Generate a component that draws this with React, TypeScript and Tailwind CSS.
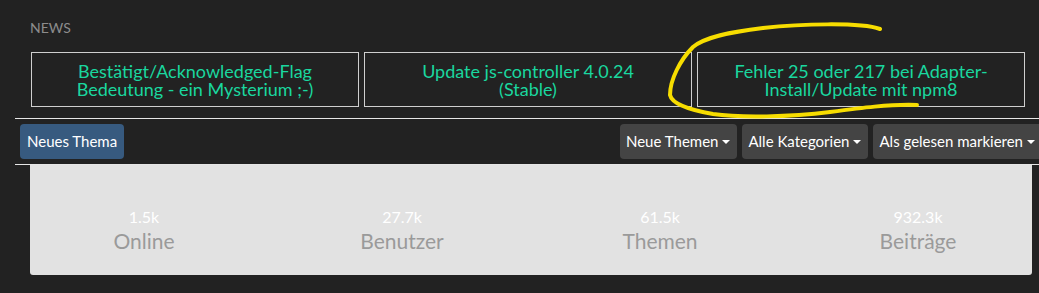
import { ReactNode } from "react";

const news = [
  ["Bestätigt/Acknowledged-Flag", "Bedeutung - ein Mysterium ;-)"],
  ["Update js-controller 4.0.24", "(Stable)"],
  ["Fehler 25 oder 217 bei Adapter-", "Install/Update mit npm8"],
];

const stats = [
  { value: "1.5k", label: "Online" },
  { value: "27.7k", label: "Benutzer" },
  { value: "61.5k", label: "Themen" },
  { value: "932.3k", label: "Beiträge" },
];

function DropButton({ children }: { children: ReactNode }) {
  return (
    <button className="flex h-[35px] items-center rounded-[4px] bg-[#444444] pl-[6px] pr-[7px] text-[15px] text-white">
      {children}
      <span className="ml-[4px] mt-[1px] h-0 w-0 border-x-[4px] border-t-[4px] border-x-transparent border-t-white"></span>
    </button>
  );
}

export default function App() {
  return (
    <div
      className="relative h-[293px] w-[1039px] overflow-hidden bg-[#222222]"
      style={{ fontFamily: "Lato, 'Open Sans', sans-serif" }}
    >
      <div className="pl-[30px] pt-[21px] text-[14px] leading-[14px] text-[#8c8c8c]">
        NEWS
      </div>

      {/* news cards */}
      <div className="ml-[31px] mt-[17px] flex gap-[5px]">
        {news.map((n, i) => (
          <div
            key={i}
            className="flex h-[55px] w-[328px] flex-col items-center justify-center border border-[#cfcfcf] text-center text-[18px] leading-[18px] text-[#1ad79f]"
          >
            <span>{n[0]}</span>
            <span>{n[1]}</span>
          </div>
        ))}
      </div>

      <div className="ml-[15px] w-[1032px]">
        {/* toolbar */}
        <div className="mt-[11px] flex h-[47px] items-center justify-between border-y border-[#e6e6e6] px-[5px]">
          <button className="flex h-[35px] items-center rounded-[4px] bg-[#375a7f] px-[7px] text-[15px] text-white">
            Neues Thema
          </button>
          <div className="flex gap-[5px]">
            <DropButton>Neue Themen</DropButton>
            <DropButton>Alle Kategorien</DropButton>
            <DropButton>Als gelesen markieren</DropButton>
          </div>
        </div>

        {/* stats */}
        <div className="ml-[15px] h-[110px] w-[1002px] rounded-b-[3px] bg-[#e2e2e2]">
          <div className="-ml-[15px] grid w-[1032px] grid-cols-4 pt-[43px] text-center">
            {stats.map((s) => (
              <div key={s.label} className="flex flex-col items-center">
                <span className="text-[16px] leading-[18px] text-white">{s.value}</span>
                <span className="mt-[2px] text-[21px] leading-[25px] text-[#9a9a9a]">
                  {s.label}
                </span>
              </div>
            ))}
          </div>
        </div>
      </div>

      {/* hand drawn highlight */}
      <svg className="pointer-events-none absolute left-0 top-0" width="1039" height="293">
        <path
          d="M880,29 C860,22 800,24 763,28 C730,32 705,37 693,47 C680,60 670,80 670,95 C672,104 690,110 713,114 C740,118 790,117 830,112 C860,108 890,104 917,105"
          fill="none"
          stroke="#f7dd00"
          strokeWidth="4"
          strokeLinecap="round"
        />
      </svg>
    </div>
  );
}
